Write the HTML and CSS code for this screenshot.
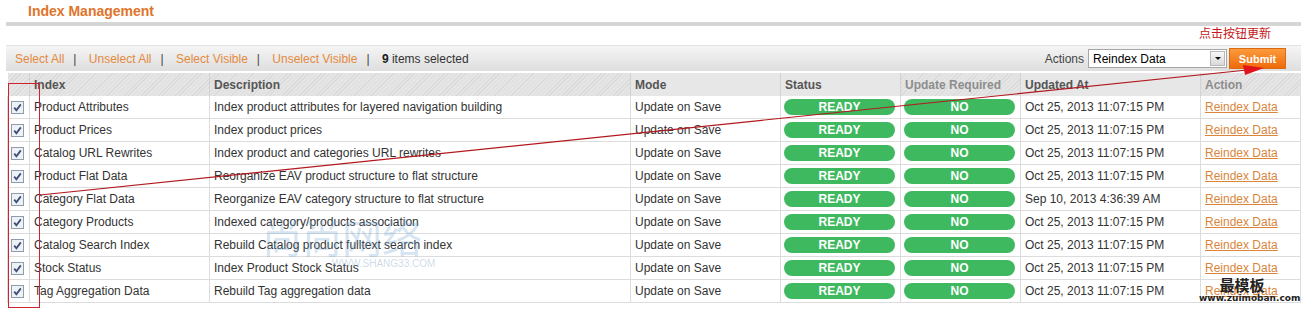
FILE: index.html
```html
<!DOCTYPE html>
<html lang="en">
<head>
    <meta charset="UTF-8">
    <title>Index Management</title>
    <link rel="stylesheet" href="styles.css">
</head>
<body>
<div class="page">

    <!-- title -->
    <div class="content-header">
        <h3>Index Management</h3>
    </div>
    <div class="header-rule"></div>
    <div class="note">点击按钮更新</div>

    <!-- massaction toolbar -->
    <div class="massaction">
        <div class="mass-links">
            <a href="#">Select All</a><span class="sep">|</span>
            <a href="#">Unselect All</a><span class="sep">|</span>
            <a href="#">Select Visible</a><span class="sep">|</span>
            <a href="#">Unselect Visible</a><span class="sep">|</span>
            <span><b>9</b> items selected</span>
        </div>
        <div class="mass-form">
            <span class="mass-label">Actions</span>
            <div class="select">
                <span>Reindex Data</span>
                <span class="select-btn"><i></i></span>
            </div>
            <button class="submit">Submit</button>
        </div>
    </div>

    <!-- grid -->
    <table class="grid">
        <colgroup>
            <col style="width:22px">
            <col style="width:180px">
            <col style="width:421px">
            <col style="width:150px">
            <col style="width:120px">
            <col style="width:120px">
            <col style="width:180px">
            <col style="width:100px">
        </colgroup>
        <thead>
            <tr>
                <th></th>
                <th>Index</th>
                <th>Description</th>
                <th class="plain">Mode</th>
                <th class="plain">Status</th>
                <th class="muted">Update Required</th>
                <th class="plain">Updated At</th>
                <th class="muted">Action</th>
            </tr>
        </thead>
        <tbody id="rows"></tbody>
    </table>

    <!-- watermarks -->
    <div class="wm-logo">尚尚网络<span>WWW.SHANG33.COM</span></div>
    <div class="wm-corner"><b>最模板</b><span>www.zuimoban.com</span></div>

    <!-- annotation -->
    <svg class="annotation" width="1309" height="315" viewBox="0 0 1309 315">
        <rect x="8.5" y="83.5" width="31" height="224" fill="none" stroke="#d0222c" stroke-width="1"/>
        <line x1="40" y1="195" x2="1252" y2="69.5" stroke="#b3181e" stroke-width="1.2"/>
        <polygon points="1264,68 1243,65 1245,75" fill="#e0141a"/>
    </svg>
</div>

<script>
    const rows = [
        ['Product Attributes', 'Index product attributes for layered navigation building', 'Oct 25, 2013 11:07:15 PM'],
        ['Product Prices', 'Index product prices', 'Oct 25, 2013 11:07:15 PM'],
        ['Catalog URL Rewrites', 'Index product and categories URL rewrites', 'Oct 25, 2013 11:07:15 PM'],
        ['Product Flat Data', 'Reorganize EAV product structure to flat structure', 'Oct 25, 2013 11:07:15 PM'],
        ['Category Flat Data', 'Reorganize EAV category structure to flat structure', 'Sep 10, 2013 4:36:39 AM'],
        ['Category Products', 'Indexed category/products association', 'Oct 25, 2013 11:07:15 PM'],
        ['Catalog Search Index', 'Rebuild Catalog product fulltext search index', 'Oct 25, 2013 11:07:15 PM'],
        ['Stock Status', 'Index Product Stock Status', 'Oct 25, 2013 11:07:15 PM'],
        ['Tag Aggregation Data', 'Rebuild Tag aggregation data', 'Oct 25, 2013 11:07:15 PM']
    ];

    const check = '<svg class="cb" width="13" height="13" viewBox="0 0 13 13">' +
        '<rect x="0.5" y="0.5" width="12" height="12" fill="#eef2f6" stroke="#8f9cab"/>' +
        '<path d="M3.2 6.6 L5.4 9.2 L9.8 3.4" fill="none" stroke="#3d4f78" stroke-width="1.8"/></svg>';

    let html = '';
    rows.forEach(function (r) {
        html += '<tr>' +
            '<td class="cb-cell">' + check + '</td>' +
            '<td>' + r[0] + '</td>' +
            '<td>' + r[1] + '</td>' +
            '<td>Update on Save</td>' +
            '<td class="pill-cell"><span class="pill">READY</span></td>' +
            '<td class="pill-cell"><span class="pill">NO</span></td>' +
            '<td>' + r[2] + '</td>' +
            '<td><a href="#">Reindex Data</a></td>' +
            '</tr>';
    });
    document.getElementById('rows').innerHTML = html;
</script>
</body>
</html>
```

FILE: styles.css
```css
body {
    margin: 0;
    background: #fff;
    font-family: "Liberation Sans", Arial, sans-serif;
    font-size: 12px;
    color: #333;
}

.page {
    position: relative;
    width: 1295px;
    height: 315px;
    padding: 0 8px 0 6px;
}

/* 제목 */
.content-header {
    height: 22px;
    padding-left: 22px;
}
.content-header h3 {
    margin: 0;
    font-size: 14px;
    line-height: 22px;
    color: #e0742a;
}
.header-rule {
    height: 4px;
    background: #d6d6d6;
}
.note {
    height: 12px;
    margin-bottom: 6px;
    padding-top: 1px;
    padding-right: 30px;
    text-align: right;
    font-family: "Noto Sans CJK SC", sans-serif;
    font-size: 12px;
    line-height: 12px;
    color: #c41820;
}

/* 툴바 */
.massaction {
    display: flex;
    justify-content: space-between;
    align-items: center;
    height: 25px;
    padding: 0 15px 0 9px;
    border-top: 1px solid #e2e2e2;
    background: linear-gradient(#f5f5f5, #dedede);
}
.mass-links a {
    color: #e48a3e;
    text-decoration: none;
}
.mass-links .sep {
    margin: 0 9px;
    color: #444;
}
.mass-links b {
    color: #222;
}
.mass-form {
    display: flex;
    align-items: center;
}
.mass-label {
    margin-right: 4px;
    color: #444;
}
.select {
    display: flex;
    justify-content: space-between;
    align-items: center;
    box-sizing: border-box;
    width: 139px;
    height: 19px;
    padding-left: 4px;
    border: 1px solid #a6a6a6;
    background: #fff;
    color: #000;
}
.select-btn {
    display: flex;
    align-items: center;
    justify-content: center;
    width: 15px;
    height: 15px;
    margin-right: 1px;
    border: 1px solid #b8b8b8;
    box-sizing: border-box;
    background: linear-gradient(#f8f8f8, #d8d8d8);
}
.select-btn i {
    border-left: 3px solid transparent;
    border-right: 3px solid transparent;
    border-top: 3px solid #111;
}
.submit {
    width: 57px;
    height: 21px;
    margin-left: 2px;
    padding: 0;
    border: 1px solid #dd6a12;
    background: linear-gradient(#fb9b3c, #f06a0a);
    color: #fff;
    font-family: "Liberation Sans", Arial, sans-serif;
    font-size: 11px;
    font-weight: bold;
}

/* 그리드 */
.grid {
    width: 1293px;
    margin: 2px 0 0 1px;
    table-layout: fixed;
    border-collapse: collapse;
}
.grid th {
    height: 23px;
    padding: 0 4px;
    border-left: 1px solid #d2d2d2;
    text-align: left;
    font-weight: bold;
    color: #555;
    background: repeating-linear-gradient(-45deg, #d9d9d9 0 1px, #e6e6e6 1px 3px);
}
.grid th:first-child {
    border-left: none;
}
.grid th.plain {
    background: #e7e7e7;
}
.grid th.muted {
    color: #8d8d8d;
}
.grid td {
    height: 22px;
    padding: 0 4px;
    border: 1px solid #dcdcdc;
    border-top: none;
    white-space: nowrap;
    overflow: hidden;
}
.grid td a {
    color: #d9863c;
}
.grid .cb-cell {
    padding: 0 0 0 3px;
}
.cb {
    display: block;
}
.grid .pill-cell {
    padding: 0 5px 0 3px;
}
.pill {
    display: block;
    height: 16px;
    border-radius: 8px;
    background: #3eb95f;
    color: #fff;
    font-weight: bold;
    line-height: 16px;
    text-align: center;
}

/* 워터마크 */
.wm-logo {
    position: absolute;
    left: 262px;
    top: 212px;
    font-family: "Noto Sans CJK SC", sans-serif;
    font-size: 40px;
    line-height: 48px;
    color: rgba(110, 165, 210, 0.3);
}
.wm-logo span {
    position: absolute;
    left: 70px;
    top: 46px;
    font-family: "Liberation Sans", Arial, sans-serif;
    font-size: 10px;
    line-height: 12px;
    color: rgba(110, 150, 190, 0.35);
}
.wm-corner {
    position: absolute;
    left: 1199px;
    top: 277px;
    width: 100px;
    text-align: center;
    color: #222;
}
.wm-corner b {
    display: block;
    padding-right: 14px;
    font-family: "Noto Sans CJK SC", serif;
    font-size: 15px;
    line-height: 16px;
}
.wm-corner span {
    display: block;
    font-family: "DejaVu Sans", sans-serif;
    font-size: 9px;
    font-weight: bold;
    line-height: 11px;
}

.annotation {
    position: absolute;
    top: 0;
    left: 0;
    pointer-events: none;
}
```
